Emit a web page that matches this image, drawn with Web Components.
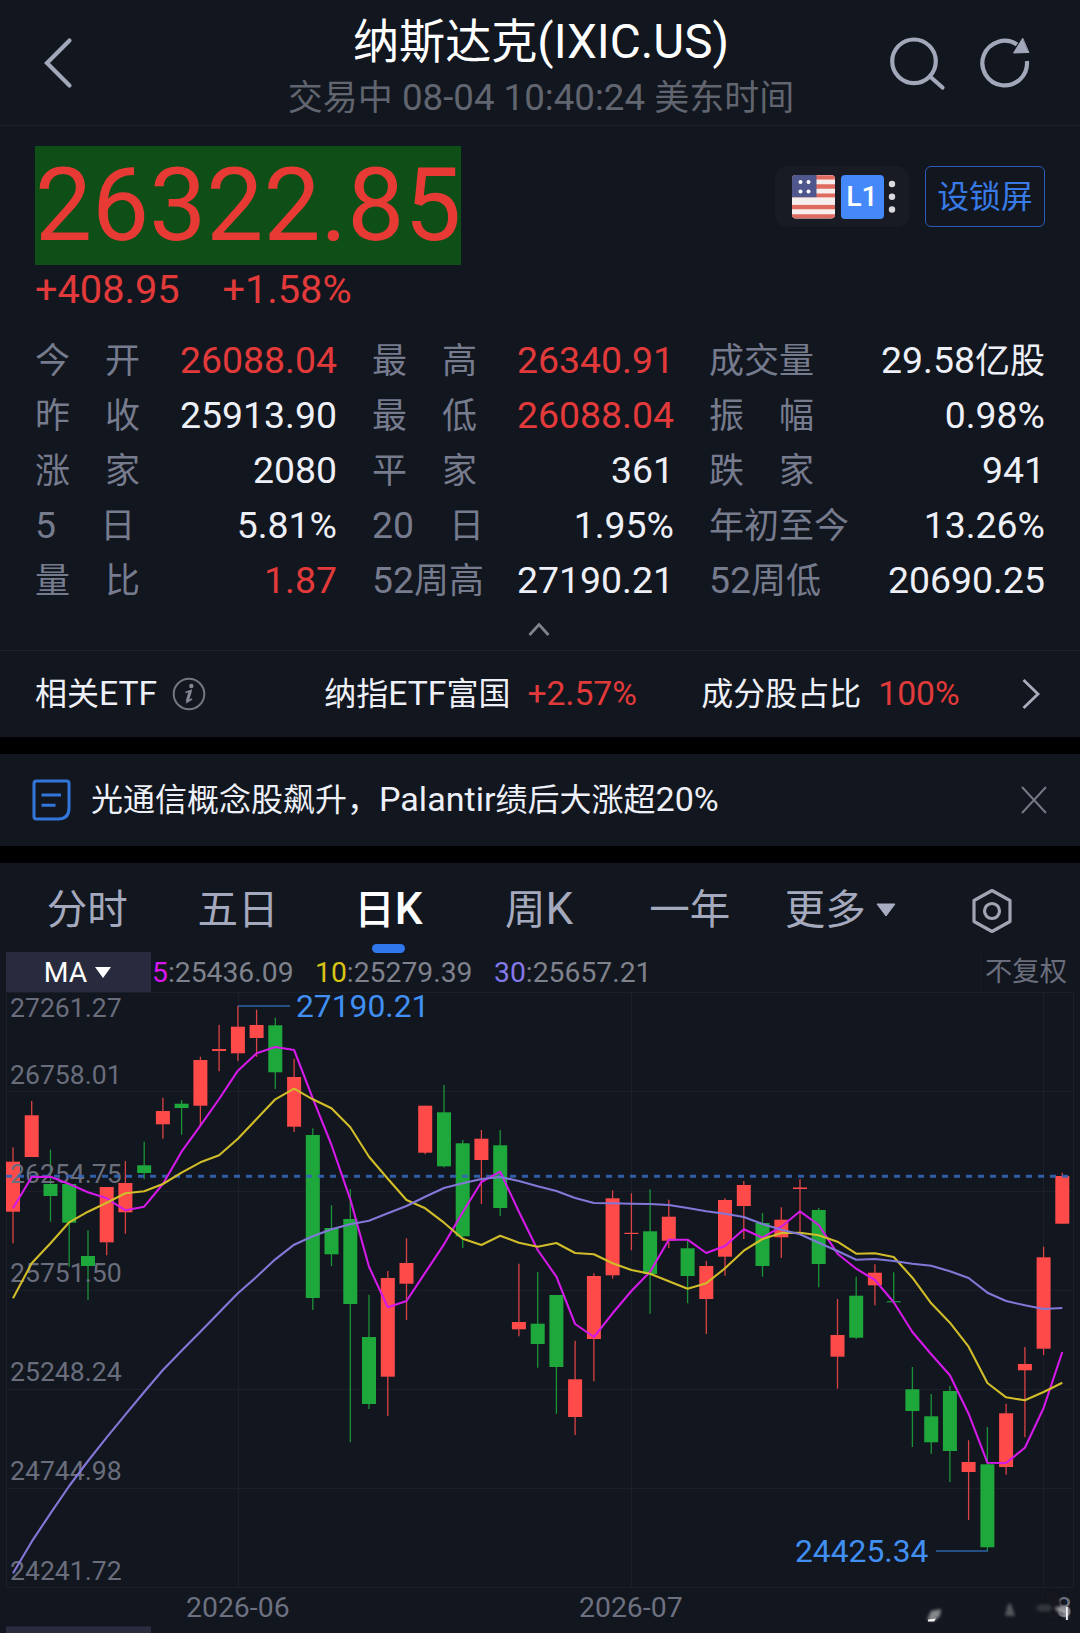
<!DOCTYPE html>
<html lang="zh-CN">
<head>
<meta charset="utf-8">
<title>纳斯达克(IXIC.US)</title>
<style>
    body {
        margin: 0;
        width: 1080px;
        height: 1633px;
        overflow: hidden;
        background: #000;
        color: #eef0f8;
        font-family: Roboto, "Noto Sans CJK SC", sans-serif;
        --panel: #12161f;
        --line: #1b1f29;
        --up: #e23a3a;
        --label: #767b8e;
        --icon: #a3a7ba;
        --blue: #3276e8;
    }
</style>
</head>
<body>
<quote-page></quote-page>

<script>
// Han runs are set slightly smaller than the latin digits beside them
const mixed = text => text.replace(/[\u3000-\u9fff\uff0c]+/g, run => `<span class="han">${run}</span>`);
const HAN = `.han { font-size: var(--han, .936em); line-height: 1; white-space: pre; }`;

class QuoteHeader extends HTMLElement {
    constructor() {
        super();
        this.root = this.attachShadow({mode: 'open'});
    }

    connectedCallback() {
        this.root.innerHTML =
            `<style>
                ${HAN}
                :host {
                    display: grid;
                    grid-template-columns: 240px 1fr 240px;
                    height: 125px;
                    border-bottom: 1px solid var(--line);
                    background: var(--panel);
                }
                svg { fill: none; stroke: var(--icon); stroke-width: 4.2; stroke-linecap: round; }
                .back { padding: 36px 0 0 42px; }
                .titles { text-align: center; white-space: nowrap; }
                h1 { margin: 12px 0 0 2px; font-weight: 400; font-size: 47.6px; line-height: 60px; color: #fff; --han: 46.1px; }
                p { margin: 4px 0 0 2px; font-size: 36.7px; line-height: 44px; color: #61656f; --han: 35px; }
                .tools { display: flex; gap: 33px; padding: 35px 0 0 48px; }
            </style>
            <div class="back">
                <svg width="32" height="54" viewBox="42 36 32 54"><path d="M69.500 40.500 47 63 69.500 85.500"/></svg>
            </div>
            <div class="titles">
                <h1>${mixed('纳斯达克(IXIC.US)')}</h1>
                <p>${mixed('交易中 08-04 10:40:24 美东时间')}</p>
            </div>
            <div class="tools">
                <svg width="58" height="58" viewBox="888 35 58 58"><circle cx="914" cy="61.300" r="21.800"/><path d="M930 76.500 942.500 87.500"/></svg>
                <svg width="52" height="58" viewBox="980 35 52 58"><path stroke-linecap="butt" d="M1018 44.500A22.300 22.300 0 1 0 1027.900 61"/><path fill="#a3a7ba" stroke-width="1" stroke-linejoin="round" d="M1023.500 38.500 1014.500 53 1029.500 52.500z"/></svg>
            </div>`;
    }
}

class QuotePrice extends HTMLElement {
    constructor() {
        super();
        this.root = this.attachShadow({mode: 'open'});
    }

    connectedCallback() {
        this.root.innerHTML =
            `<style>
                :host { display: flex; justify-content: space-between; height: 165px; padding: 20px 35px 0; }
                .price {
                    width: 426px;
                    height: 119px;
                    background: #0e4f17;
                    color: #e83a35;
                    font-size: 101.6px;
                    line-height: 120px;
                    white-space: nowrap;
                }
                .change { display: flex; gap: 43px; padding-top: 1.500px; font-size: 39.7px; line-height: 46px; color: var(--up); }
                .badges { display: flex; align-items: flex-start; gap: 16.500px; padding-top: 20px; }
                .pill {
                    display: flex;
                    gap: 6px;
                    width: 134px;
                    height: 61px;
                    box-sizing: border-box;
                    padding: 9px 0 0 17px;
                    border-radius: 12px;
                    background: #181b24;
                }
                .level {
                    width: 43px;
                    height: 43.500px;
                    border-radius: 4px;
                    background: #4488fa;
                    color: #fff;
                    font-size: 28.500px;
                    font-weight: 500;
                    line-height: 44px;
                    text-align: center;
                }
                .lock {
                    box-sizing: border-box;
                    width: 120px;
                    height: 61px;
                    border: 1.500px solid #2b5cb8;
                    border-radius: 6px;
                    color: #397be6;
                    font-size: 31.800px;
                    line-height: 60px;
                    text-align: center;
                }
            </style>
            <div>
                <div class="price">26322.85</div>
                <div class="change"><span>+408.95</span><span>+1.58%</span></div>
            </div>
            <div class="badges">
                <div class="pill">
                    <svg width="43" height="44" viewBox="0 0 43 44">
                        <clipPath id="flag"><rect width="43" height="43.500" rx="4"/></clipPath>
                        <g clip-path="url(#flag)">
                            <rect width="43" height="44" fill="#f7efee"/>
                            <path stroke="#df6b60" stroke-width="4.300" d="M0 2.300h43M0 11.500h43M0 20.700h43M0 32h43M0 41.300h43"/>
                            <rect width="24.500" height="22.500" fill="#50578c"/>
                            <path fill="#f7efee" d="M0 22.500h43v7H0z"/>
                            <g fill="#fff"><circle cx="8.500" cy="7" r="2"/><circle cx="16.500" cy="7" r="2"/><circle cx="8.500" cy="16.500" r="2"/><circle cx="16.500" cy="16.500" r="2"/></g>
                        </g>
                    </svg>
                    <div class="level">L1</div>
                    <svg width="8" height="44" viewBox="0 0 8 44" fill="#d9dadd" style="margin-left:-2px"><circle cx="4" cy="9" r="3.200"/><circle cx="4" cy="21.800" r="3.200"/><circle cx="4" cy="34.500" r="3.200"/></svg>
                </div>
                <div class="lock">设锁屏</div>
            </div>`;
    }
}

const STATS = [
    ['今\u3000开', '26088.04', 1], ['最\u3000高', '26340.91', 1], ['成交量', '29.58亿股'],
    ['昨\u3000收', '25913.90'], ['最\u3000低', '26088.04', 1], ['振\u3000幅', '0.98%'],
    ['涨\u3000家', '2080'], ['平\u3000家', '361'], ['跌\u3000家', '941'],
    ['5 \u3000日', '5.81%'], ['20\u3000日', '1.95%'], ['年初至今', '13.26%'],
    ['量\u3000比', '1.87', 1], ['52周高', '27190.21'], ['52周低', '20690.25']
];

class QuoteStats extends HTMLElement {
    constructor() {
        super();
        this.root = this.attachShadow({mode: 'open'});
    }

    connectedCallback() {
        this.root.innerHTML =
            `<style>
                ${HAN}
                :host { display: block; height: 339px; border-bottom: 1px solid #1f232d; }
                dl {
                    display: grid;
                    grid-template-columns: 302px 302px 336px;
                    grid-auto-rows: 55px;
                    column-gap: 35px;
                    margin: 0;
                    padding: 21px 35px 0;
                    font-size: 37.4px;
                    line-height: 56px;
                }
                div { display: flex; justify-content: space-between; white-space: nowrap; }
                dt { color: var(--label); }
                dd { margin: 0; }
                .up { color: var(--up); }
                svg { display: block; margin: 14px auto 0; }
            </style>
            <dl>${STATS.map(([name, value, up]) =>
                `<div><dt>${mixed(name)}</dt><dd${up ? ' class="up"' : ''}>${mixed(value)}</dd></div>`).join('')}</dl>
            <svg width="24" height="16" fill="none" stroke="#81848f" stroke-width="2.800"><path d="M1.500 14 11 3.500 20.500 14"/></svg>`;
    }
}

class RelatedEtf extends HTMLElement {
    constructor() {
        super();
        this.root = this.attachShadow({mode: 'open'});
    }

    connectedCallback() {
        this.root.innerHTML =
            `<style>
                ${HAN}
                :host {
                    display: flex;
                    align-items: center;
                    height: 86px;
                    padding: 0 35px;
                    font-size: 33.7px;
                    line-height: 48px;
                    white-space: nowrap;
                    --han: 32px;
                }
                em { font-style: normal; color: var(--up); }
                .info { width: 34px; margin-left: 15px; }
                .fund { width: 320px; margin-left: 118px; }
                .fund em { margin-left: 17px; }
                .share { margin-left: 57px; }
                .share em { margin-left: 17px; }
                .more { margin-left: auto; margin-right: 4px; }
            </style>
            <span>${mixed('相关ETF')}</span>
            <svg class="info" width="34" height="34" viewBox="0 0 34 34" fill="none" stroke="#747782" stroke-width="2">
                <circle cx="17" cy="17" r="15.300"/>
                <circle cx="19.300" cy="9" r="2.200" fill="#858894" stroke="none"/>
                <path stroke="#858894" stroke-width="1.500" d="M13.500 15.500q3-1 5.500-2l-4 11.500 5-3"/>
                <path stroke="#858894" stroke-width="3" d="M18.300 14 15.200 24.500"/>
            </svg>
            <span class="fund">${mixed('纳指ETF富国')}<em>+2.57%</em></span>
            <span class="share">${mixed('成分股占比')}<em>100%</em></span>
            <svg class="more" width="20" height="32" viewBox="0 0 20 32" fill="none" stroke="#a9adbb" stroke-width="2.800"><path d="M2.500 2 17 16 2.500 30"/></svg>`;
    }
}

class NewsBar extends HTMLElement {
    constructor() {
        super();
        this.root = this.attachShadow({mode: 'open'});
        this.root.innerHTML =
            `<style>
                :host { display: flex; align-items: center; height: 92px; padding: 0 33px 0 32px; font-size: 34.1px; line-height: 46px; --han: 32px; }
                ::slotted(*) { margin: 0 auto 2px 20px; white-space: nowrap; }
            </style>
            <svg width="39" height="42" viewBox="0 0 39 42" fill="none" stroke="#3276dc" stroke-width="3">
                <path stroke-linejoin="round" d="M4.500 2H34.500Q37 2 37 4.500V29Q37 40 26 40H4.500Q2 40 2 37.500V4.500Q2 2 4.500 2Z"/>
                <path d="M9.500 16H29M9.500 26.300H23.500"/>
            </svg>
            <slot></slot>
            <svg width="26" height="28" viewBox="0 0 26 28" fill="none" stroke="#747887" stroke-width="2"><path d="M1 1 25 27M25 1 1 27"/></svg>`;
    }
}

class ChartTabs extends HTMLElement {
    constructor() {
        super();
        this.root = this.attachShadow({mode: 'open'});
    }

    connectedCallback() {
        const tabs = ['分时', '五日', '日K', '周K', '一年', '更多'];
        this.root.innerHTML =
            `<style>
                ${HAN}
                :host {
                    display: flex;
                    height: 89px;
                    padding-left: 12px;
                    color: #a5a9bd;
                    font-size: 44px;
                    line-height: 93px;
                    --han: 40.500px;
                }
                .tab { display: flex; flex-direction: column; align-items: center; width: 150.600px; height: 90px; white-space: nowrap; }
                .tab > div { height: 81px; }
                .on { color: #fff; font-weight: 500; }
                .on::after { content: ""; width: 33px; height: 9px; border-radius: 5px; background: #2f77ea; }
                .arrow { margin-left: 10px; vertical-align: 7px; }
                .gear { margin: 24px 0 0 54px; }
            </style>
            ${tabs.map((tab, i) =>
                `<div class="tab${i === 2 ? ' on' : ''}"><div>${mixed(tab)}${i === 5 ?
                    '<svg class="arrow" width="20" height="14"><path fill="#a9adc4" stroke="#a9adc4" stroke-linejoin="round" d="M1 1H19L10 13z"/></svg>' : ''}</div></div>`).join('')}
            <svg class="gear" width="44" height="48" viewBox="0 0 44 48" fill="none" stroke="#a0a4b3" stroke-width="3.200" stroke-linejoin="round">
                <path d="M22 3.500 40 13.500V34.500L22 44.500 4 34.500V13.500z"/><circle cx="22" cy="24" r="7.500"/>
            </svg>`;
    }
}

class MaLegend extends HTMLElement {
    constructor() {
        super();
        this.root = this.attachShadow({mode: 'open'});
    }

    connectedCallback() {
        this.root.innerHTML =
            `<style>
                :host { display: flex; height: 40px; padding: 0 6px; font-size: 28.300px; line-height: 41px; color: #7f828c; white-space: nowrap; }
                .pick {
                    display: flex;
                    align-items: center;
                    justify-content: center;
                    gap: 8px;
                    width: 145px;
                    margin-right: 1px;
                    background: #272b3d;
                    color: #fff;
                }
                .pick svg { margin: 2px 2px 0 0; }
                .ma { margin-right: 21.500px; }
                .adjust { width: 90px; margin-left: auto; padding-right: 3px; border-left: 1px solid #181c25; text-align: center; font-size: 27.300px; color: #696d7c; }
            </style>
            <div class="pick">MA<svg width="16" height="12" fill="#fff"><path d="M0 0H16L8 11z"/></svg></div>
            <span class="ma"><b style="font-weight:400;color:#d816ef">5</b>:25436.09</span>
            <span class="ma"><b style="font-weight:400;color:#d8c414">10</b>:25279.39</span>
            <span class="ma"><b style="font-weight:400;color:#8478e8">30</b>:25657.21</span>
            <div class="adjust">不复权</div>`;
    }
}

// direction, high, body top, body bottom, low
const CANDLES = [
    ['r', 1147.3, 1161.7, 1211.7, 1243.3], ['r', 1101, 1115.3, 1157, 1157], ['g', 1149.7, 1184, 1196, 1221.7],
    ['g', 1184, 1184, 1222.7, 1266.7], ['g', 1230.3, 1256, 1266, 1300], ['r', 1187, 1187, 1242.3, 1255.3],
    ['r', 1161, 1183, 1212.3, 1233.7], ['g', 1141.7, 1165.3, 1173, 1179.3], ['r', 1097.7, 1111, 1124.3, 1138.7],
    ['g', 1100, 1103.7, 1108, 1134.7], ['r', 1056.7, 1060, 1105.7, 1125.7], ['r', 1025, 1049, 1051, 1071.3],
    ['r', 1005.7, 1026.7, 1053.3, 1061], ['r', 1009.7, 1025, 1038, 1056.7], ['g', 1017.7, 1025.3, 1072.3, 1089],
    ['r', 1058.7, 1077, 1126.7, 1132], ['g', 1128.3, 1135, 1298, 1310], ['g', 1205.3, 1228, 1254.3, 1266],
    ['g', 1189, 1219, 1304, 1442.3], ['g', 1294.7, 1337, 1404, 1409], ['r', 1271, 1278, 1376.7, 1416],
    ['r', 1238.3, 1263, 1283.7, 1320], ['r', 1105.7, 1105.7, 1152.7, 1154.3], ['g', 1085, 1112.3, 1166.3, 1167.5],
    ['g', 1140, 1143.3, 1236.3, 1248], ['r', 1130, 1138.7, 1160, 1204], ['g', 1130, 1145.3, 1208, 1216],
    ['r', 1263.7, 1322, 1329.3, 1336.3], ['g', 1272, 1323.7, 1344, 1367.7], ['g', 1295, 1295, 1367, 1413.7],
    ['r', 1340.7, 1379.3, 1417, 1435], ['r', 1273.3, 1276, 1339, 1381.3], ['r', 1190.3, 1198.3, 1275.3, 1278.7],
    ['r', 1193.3, 1232.8, 1234, 1250.3], ['g', 1189.3, 1231.3, 1274, 1313.7], ['r', 1199.7, 1216.7, 1240.7, 1248],
    ['g', 1240, 1248.3, 1276, 1303.3], ['r', 1261, 1266, 1299, 1334], ['r', 1198.3, 1200, 1256.7, 1275.7],
    ['r', 1181, 1185, 1206, 1239], ['g', 1213, 1223, 1266, 1276.7], ['r', 1207.3, 1219.7, 1237.3, 1258],
    ['r', 1179, 1187.5, 1189, 1231.7], ['g', 1208, 1210, 1264, 1287.3], ['r', 1299, 1335, 1356.7, 1388.7],
    ['g', 1276.7, 1295.7, 1337.7, 1339], ['r', 1264.3, 1272.7, 1285.3, 1305.3], ['g', 1272.3, 1301.2, 1302.3, 1302.3],
    ['g', 1367, 1389.3, 1411, 1447], ['g', 1394, 1416.3, 1442.3, 1453.7], ['g', 1386, 1391, 1451, 1482],
    ['r', 1440.3, 1462, 1472, 1520], ['g', 1427, 1464.3, 1547.3, 1551.3], ['r', 1403.7, 1413.3, 1467, 1474.7],
    ['r', 1347, 1364, 1370.3, 1437.3], ['r', 1246.7, 1257.3, 1348.7, 1355], ['r', 1172.7, 1176, 1223.7, 1223.7]
];

const AVERAGES = [
    ['#d31ae8', [1208.3, 1177, 1176.7, 1184, 1192.3, 1198.3, 1210.3, 1206.7, 1184, 1151.7, 1125.7, 1099, 1070.7, 1053.3, 1047, 1050, 1098.3, 1145, 1199.3, 1266.7, 1307.3, 1301, 1272.7, 1244.3, 1212.3, 1182, 1171.7, 1211.7, 1250, 1276.7, 1324, 1337, 1313.3, 1291, 1271.7, 1239.7, 1239.7, 1253, 1246, 1229.3, 1237.7, 1226.7, 1211.3, 1225, 1253.7, 1268.7, 1280, 1302.3, 1332, 1354.3, 1375.3, 1413.7, 1462.7, 1463, 1447.7, 1408, 1352]],
    ['#d1bc2a', [1298.3, 1263.3, 1243.3, 1222.3, 1211.7, 1202.7, 1193.3, 1191.3, 1184, 1172.7, 1162.3, 1155.3, 1138.7, 1119, 1099.3, 1088.7, 1099.3, 1108.3, 1127.3, 1156.7, 1178.7, 1200, 1208.3, 1222.7, 1238.7, 1245, 1235.7, 1242.7, 1246.7, 1243, 1253, 1254.3, 1263.3, 1270, 1273.7, 1281.3, 1288.7, 1283.3, 1268.3, 1250.7, 1239, 1233, 1232.7, 1235.3, 1241.7, 1253.7, 1253.3, 1257, 1277.7, 1303.3, 1322.7, 1346.7, 1383, 1397.3, 1400.3, 1392, 1382.7]],
    ['#8178d8', [1573.3, 1541.7, 1513.3, 1486, 1461, 1437.3, 1414.7, 1392, 1370, 1350.7, 1331.7, 1312.5, 1293.3, 1276.7, 1259.3, 1244.7, 1236.3, 1229.3, 1224.3, 1220.7, 1213.3, 1206, 1196.7, 1188, 1183.3, 1179, 1177, 1181, 1186.3, 1191, 1198, 1203, 1203.3, 1203.7, 1204, 1205, 1208, 1211.3, 1213.7, 1217, 1224, 1229.7, 1234.3, 1242.7, 1251, 1259.7, 1259, 1261, 1263.7, 1265.7, 1271.3, 1278, 1292.7, 1301, 1305.3, 1309, 1308]]
];

const AXIS = [['27261.27', 1017.3], ['26758.01', 1084.3], ['26254.75', 1183], ['25751.50', 1282], ['25248.24', 1381], ['24744.98', 1480], ['24241.72', 1580]];

class CandleChart extends HTMLElement {
    constructor() {
        super();
        this.root = this.attachShadow({mode: 'open'});
    }

    connectedCallback() {
        this.root.innerHTML =
            `<style>
                :host { display: block; height: 641px; }
                svg { display: block; }
                .axis { font-size: 26.600px; fill: #696d7c; }
                .mark { font-size: 31.800px; fill: #418ff2; }
                .date { font-size: 28.400px; fill: #6c7080; }
            </style>
            <svg width="1080" height="641" viewBox="0 992 1080 641">
                <path stroke="#1b1f29" d="M6 992.500H1074M6 1091.500H1074M6 1191.500H1074M6 1290.500H1074M6 1389.500H1074M6 1488.500H1074M6 1587.500H1074M6.500 992V1587M238.500 992V1587M631.500 992V1587M1043.500 992V1587M1073.500 992V1587"/>
                ${CANDLES.map((c, i) => this._candle(c, this._x(i))).join('')}
                ${AXIS.map(([value, y]) => `<text class="axis" x="10" y="${y}">${value}</text>`).join('')}
                <path stroke="#3566b8" stroke-width="3" stroke-dasharray="6 6" opacity=".9" d="M6 1176.200H1069"/>
                ${AVERAGES.map(([color, ys]) =>
                    `<polyline fill="none" stroke="${color}" stroke-width="2.100" stroke-linejoin="round" points="${ys.map((y, i) => this._x(i) + ',' + y).join(' ')}"/>`).join('')}
                <path stroke="#2c64a6" stroke-width="1.500" d="M238 1006H290M936 1551H988"/>
                <text class="mark" x="296" y="1017">27190.21</text>
                <text class="mark" x="795" y="1562">24425.34</text>
                <text class="date" x="186" y="1617">2026-06</text>
                <text class="date" x="579" y="1617">2026-07</text>
                <text class="date" x="1056" y="1617">8</text>
                ${this._smudges()}
                <path fill="#2a2d40" d="M6 1626.500h145v7H6z"/>
            </svg>`;
    }

    _x(i) {
        return +(13 + i * 18.738).toFixed(1);
    }

    _candle([dir, high, top, bottom, low], x) {
        const color = dir === 'r' ? '#ff4a4a' : '#1ea83c';
        return `<path stroke="${color}" stroke-width="1.300" opacity=".85" d="M${x} ${high}V${low}"/>
                <rect fill="${color}" x="${x - 7}" y="${top}" width="14" height="${bottom - top}"/>`;
    }

    _smudges() {
        return `<defs><filter id="soft"><feGaussianBlur stdDeviation="1.500"/></filter></defs>
                <g filter="url(#soft)">
                    <path fill="#12161f" d="M1048 1592h9l4 12-3 14h-10z"/>
                    <path fill="#85878b" d="M927 1620 931 1611 941 1609 940 1616 934 1621z"/>
                    <path fill="#53565c" d="M1008 1604h3l4 12h-10z"/>
                    <ellipse fill="#30343b" cx="1044" cy="1608" rx="8" ry="4"/>
                    <path fill="#9a9ca2" d="M1055 1608 1068 1606V1619z"/>
                </g>
                <path fill="#f3f3f4" d="M1066 1607h1.800v13h-1.800zM928 1619.500l8-1-2 3h-6z"/>`;
    }
}

class QuotePage extends HTMLElement {
    constructor() {
        super();
        this.root = this.attachShadow({mode: 'open'});
    }

    connectedCallback() {
        this.root.innerHTML =
            `<style>
                ${HAN}
                :host { display: flex; flex-direction: column; gap: 17px; }
                section { background: var(--panel); }
            </style>
            <section>
                <quote-header></quote-header>
                <quote-price></quote-price>
                <quote-stats></quote-stats>
                <related-etf></related-etf>
            </section>
            <section>
                <news-bar><span>${mixed('光通信概念股飙升，Palantir绩后大涨超20%')}</span></news-bar>
            </section>
            <section>
                <chart-tabs></chart-tabs>
                <ma-legend></ma-legend>
                <candle-chart></candle-chart>
            </section>`;
    }
}

customElements.define('quote-header', QuoteHeader);
customElements.define('quote-price', QuotePrice);
customElements.define('quote-stats', QuoteStats);
customElements.define('related-etf', RelatedEtf);
customElements.define('news-bar', NewsBar);
customElements.define('chart-tabs', ChartTabs);
customElements.define('ma-legend', MaLegend);
customElements.define('candle-chart', CandleChart);
customElements.define('quote-page', QuotePage);
</script>
</body>
</html>
